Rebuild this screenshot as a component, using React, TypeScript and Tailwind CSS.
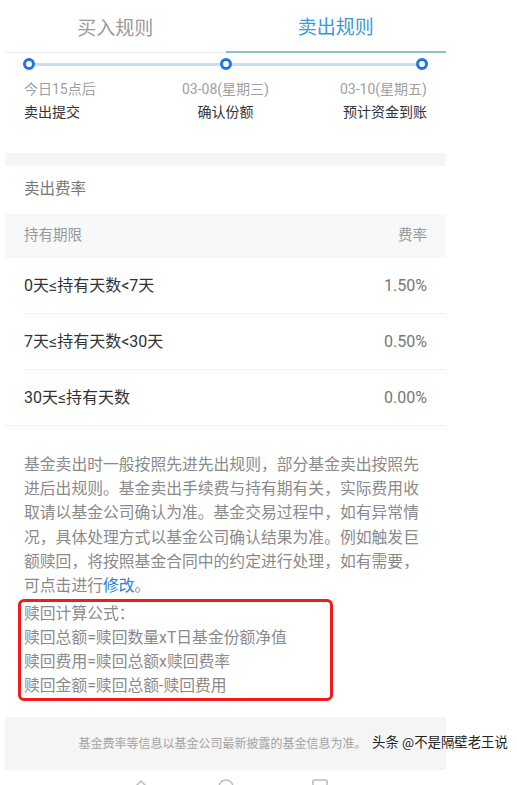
const font = { fontFamily: '"Roboto", "Noto Sans CJK SC", sans-serif' }

const steps = [
    { date: '今日15点后', label: '卖出提交', align: 'text-left' },
    { date: '03-08(星期三)', label: '确认份额', align: 'text-center' },
    { date: '03-10(星期五)', label: '预计资金到账', align: 'text-right' },
]

const rates = [
    { range: '0天≤持有天数<7天', rate: '1.50%' },
    { range: '7天≤持有天数<30天', rate: '0.50%' },
    { range: '30天≤持有天数', rate: '0.00%' },
]

const formulas = [
    '赎回计算公式：',
    '赎回总额=赎回数量xT日基金份额净值',
    '赎回费用=赎回总额x赎回费率',
    '赎回金额=赎回总额-赎回费用',
]

function Dot() {
    return <div className="h-[12px] w-[12px] shrink-0 rounded-full border-[3px] border-[#1e74e6] bg-white" />
}

export default function App() {
    return (
        <div style={font} className="relative h-[785px] w-[517px] overflow-hidden bg-white">
            <div className="ml-[5px] w-[441px]">
                {/* Tabs */}
                <div className="flex h-[53px]">
                    <div className="flex flex-1 items-center justify-center border-b border-[#ececec] pt-[6px] text-[19px] text-[#9a9a9a]">
                        买入规则
                    </div>
                    <div className="flex flex-1 items-center justify-center border-b-2 border-[#8cc1c8] pt-[6px] text-[19px] text-[#3a98d8]">
                        卖出规则
                    </div>
                </div>

                {/* Timeline */}
                <div className="flex h-[22px] items-center px-[18px]">
                    <Dot />
                    <div className="h-[3px] flex-1 bg-[#c9ddf7]" />
                    <Dot />
                    <div className="h-[3px] flex-1 bg-[#c9ddf7]" />
                    <Dot />
                </div>
                <div className="grid grid-cols-3 px-[19px] pt-[3px] text-[14px] leading-[23px]">
                    {steps.map((s) => (
                        <div key={s.label} className={s.align}>
                            <div className="text-[#a0a0a0]">{s.date}</div>
                            <div className="text-[#333]">{s.label}</div>
                        </div>
                    ))}
                </div>

                <div className="mt-[29px] h-[13px] bg-[#f5f5f5]" />

                {/* Fee table */}
                <div className="flex h-[48px] items-center px-[19px] text-[15.5px] text-[#777]">卖出费率</div>
                <div className="flex h-[44px] items-center justify-between bg-[#f7f8fa] px-[19px] text-[14.5px] text-[#999]">
                    <span>持有期限</span>
                    <span>费率</span>
                </div>
                <div className="border-b border-[#ededed]">
                    {rates.map((r, i) => (
                        <div key={r.range} className={i < rates.length - 1 ? 'ml-[19px] border-b border-[#efefef]' : 'ml-[19px]'}>
                            <div className="flex h-[55px] items-center justify-between pr-[19px]">
                                <span className="text-[16px] text-[#333]">{r.range}</span>
                                <span className="text-[16px] text-[#777]">{r.rate}</span>
                            </div>
                        </div>
                    ))}
                </div>

                {/* Notes */}
                <div className="px-[19px] pt-[27px] text-[15.8px] leading-[24.2px] text-[#8a8a8a]">
                    <p className="w-[400px]">
                        基金卖出时一般按照先进先出规则，部分基金卖出按照先进后出规则。基金卖出手续费与持有期有关，实际费用收取请以基金公司确认为准。基金交易过程中，如有异常情况，具体处理方式以基金公司确认结果为准。例如触发巨额赎回，将按照基金合同中的约定进行处理，如有需要，可点击进行<span className="text-[#2b7fd4]">修改</span>。
                    </p>
                    <div className="-ml-[6px] mt-[1px] w-[315px] rounded-[6px] border-[3px] border-[#f21b1b] pl-[3px] leading-[24px]">
                        {formulas.map((f) => (
                            <div key={f}>{f}</div>
                        ))}
                    </div>
                </div>

                {/* Footer note */}
                <div className="mt-[16px] flex h-[53px] items-center justify-center bg-[#f5f5f5] pr-[6px] text-[12px] text-[#a3a3a3]">
                    基金费率等信息以基金公司最新披露的基金信息为准。
                </div>

                {/* Bottom nav (clipped) */}
                <div className="relative h-[20px] bg-white">
                    <svg className="absolute left-[128px] top-[8px]" width="16" height="16" viewBox="0 0 16 16" fill="none" stroke="#bbb" strokeWidth="1.5">
                        <path d="M2 9 L8 3 L14 9" />
                    </svg>
                    <svg className="absolute left-[212px] top-[8px]" width="18" height="18" viewBox="0 0 18 18" fill="none" stroke="#bbb" strokeWidth="1.5">
                        <circle cx="9" cy="9" r="7" />
                    </svg>
                    <svg className="absolute left-[306px] top-[8px]" width="18" height="18" viewBox="0 0 18 18" fill="none" stroke="#bbb" strokeWidth="1.5">
                        <rect x="2" y="2" width="14" height="12" rx="1" />
                    </svg>
                </div>
            </div>

            {/* Watermark */}
            <div
                className="absolute left-[372px] top-[733px] whitespace-nowrap text-[13.4px] text-[#222]"
                style={{ textShadow: '0 0 2px #fff, 0 0 2px #fff' }}
            >
                头条 @不是隔壁老王说
            </div>
        </div>
    )
}
